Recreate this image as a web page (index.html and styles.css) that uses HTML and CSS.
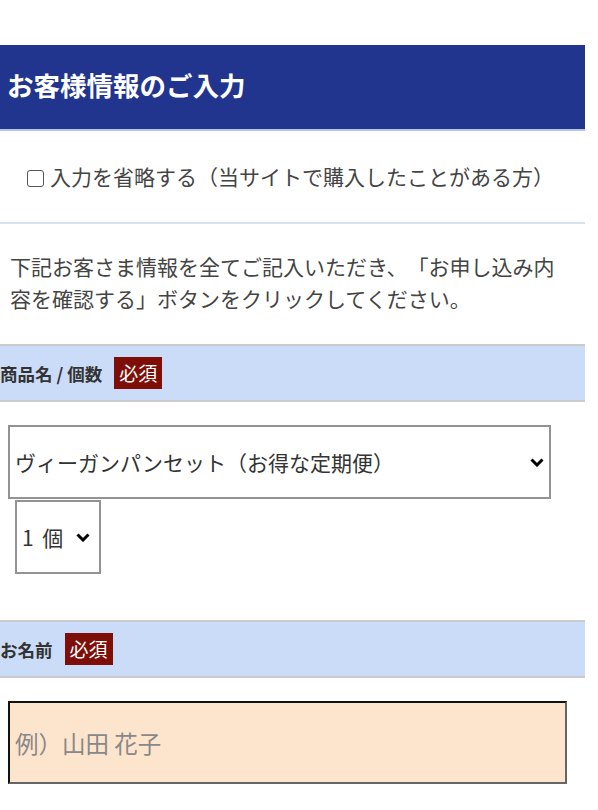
FILE: index.html
```html
<!DOCTYPE html>
<html lang="ja">
<head>
<meta charset="utf-8">
<title>お客様情報のご入力</title>
<link rel="stylesheet" href="styles.css">
</head>
<body>
<div class="page">
  <h2 class="title">お客様情報のご入力</h2>
  <div class="skip">
    <label class="skip-label"><input type="checkbox" class="cb"><span>入力を省略する（当サイトで購入したことがある方）</span></label>
  </div>
  <p class="lead">下記お客さま情報を全てご記入いただき、「お申し込み内容を確認する」ボタンをクリックしてください。</p>

  <div class="band band-first"><span class="band-label">商品名 / 個数</span><span class="req">必須</span></div>
  <div class="field">
    <div class="select wide">
      <select class="sel"><option>ヴィーガンパンセット（お得な定期便）</option></select>
      <svg class="chev" viewBox="0 0 14 9" width="14" height="9"><path d="M1.5 1.5 L7 7 L12.5 1.5" fill="none" stroke="#000" stroke-width="3"/></svg>
    </div>
    <div class="select qty">
      <select class="sel"><option>1 個</option></select>
      <svg class="chev" viewBox="0 0 14 9" width="14" height="9"><path d="M1.5 1.5 L7 7 L12.5 1.5" fill="none" stroke="#000" stroke-width="3"/></svg>
    </div>
  </div>

  <div class="band band-second"><span class="band-label">お名前</span><span class="req">必須</span></div>
  <div class="field">
    <input type="text" class="text" placeholder="例）山田 花子">
  </div>
</div>
</body>
</html>
```
FILE: styles.css
```css
html, body {
  margin: 0;
  padding: 0;
  background: #fff;
}
body {
  font-family: "Noto Sans CJK JP", "Noto Sans", sans-serif;
  color: #444;
  text-spacing-trim: space-all;
}
.page {
  width: 585px;
  padding-top: 45px;
}
.title {
  margin: 0;
  height: 86px;
  box-sizing: border-box;
  background: #21358f;
  color: #fff;
  font-size: 26.5px;
  font-weight: bold;
  display: flex;
  align-items: center;
  padding: 0 0 5px 7px;
  border-bottom: 2px solid #b7c5e4;
}
.skip {
  height: 93px;
  box-sizing: border-box;
  border-bottom: 2px solid #d8e2ee;
  display: flex;
  align-items: center;
  padding-left: 27px;
}
.skip-label {
  display: flex;
  align-items: center;
  font-size: 21px;
  color: #444;
  line-height: 1;
}
.cb {
  appearance: none;
  -webkit-appearance: none;
  flex: 0 0 17px;
  margin: 0 6px 0 0;
  width: 17px;
  height: 17px;
  border: 1.5px solid #555;
  border-radius: 3px;
  background: #fff;
  box-sizing: border-box;
  position: relative;
  top: 2px;
}
.lead {
  margin: 27px 0 0;
  padding: 0 10px;
  font-size: 21px;
  line-height: 31.5px;
  color: #444;
}
.band {
  display: flex;
  align-items: center;
  height: 58px;
  box-sizing: border-box;
  background: #cadcf8;
  border-top: 2px solid #cbcbcb;
  border-bottom: 2px solid #cbcbcb;
}
.band-first {
  margin-top: 30px;
}
.band-second {
  margin-top: 46px;
}
.band-label {
  font-size: 17.5px;
  font-weight: bold;
  color: #333;
}
.req {
  margin-left: 12px;
  width: 48px;
  height: 32px;
  line-height: 32px;
  text-align: center;
  background: #7e0f08;
  color: #fff;
  font-size: 19px;
}
.field {
  padding-top: 23px;
}
.select {
  position: relative;
  height: 74px;
}
.sel {
  appearance: none;
  -webkit-appearance: none;
  width: 100%;
  height: 100%;
  margin: 0;
  border: 2px solid #939393;
  border-radius: 0;
  background: #fff;
  color: #333;
  font-family: "Noto Sans CJK JP", "Noto Sans", sans-serif;
  font-size: 21px;
  box-sizing: border-box;
  outline: none;
  text-spacing-trim: space-all;
}
.wide {
  margin-left: 8px;
  width: 543px;
}
.wide .sel {
  padding-left: 5px;
}
.wide .chev {
  position: absolute;
  right: 7px;
  top: 33px;
}
.qty {
  margin-left: 15px;
  margin-top: 1px;
  width: 86px;
}
.qty .sel {
  padding-left: 5px;
  word-spacing: 4px;
}
.qty .chev {
  position: absolute;
  right: 11px;
  top: 33px;
}
.text {
  display: block;
  margin: 0 0 0 8px;
  width: 559px;
  height: 83px;
  box-sizing: border-box;
  border: 2px solid;
  border-color: #111 #666 #666 #111;
  background: #fde5cd;
  padding: 0 5px;
  font-family: "Noto Sans CJK JP", "Noto Sans", sans-serif;
  font-size: 23.5px;
  color: #333;
  outline: none;
}
.text::placeholder {
  color: #888;
}
```
